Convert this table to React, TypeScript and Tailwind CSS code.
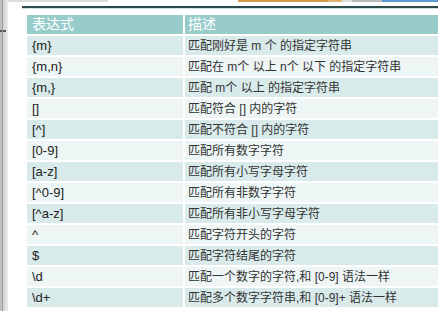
const rows: [string, string][] = [
  ["{m}", "匹配刚好是 m 个 的指定字符串"],
  ["{m,n}", "匹配在 m个 以上 n个 以下 的指定字符串"],
  ["{m,}", "匹配 m个 以上 的指定字符串"],
  ["[]", "匹配符合 [] 内的字符"],
  ["[^]", "匹配不符合 [] 内的字符"],
  ["[0-9]", "匹配所有数字字符"],
  ["[a-z]", "匹配所有小写字母字符"],
  ["[^0-9]", "匹配所有非数字字符"],
  ["[^a-z]", "匹配所有非小写字母字符"],
  ["^", "匹配字符开头的字符"],
  ["$", "匹配字符结尾的字符"],
  ["\\d", "匹配一个数字的字符,和 [0-9] 语法一样"],
  ["\\d+", "匹配多个数字字符串,和 [0-9]+ 语法一样"],
];

const font = "font-['Liberation_Sans','Noto_Sans_CJK_SC',sans-serif]";

export default function App() {
  return (
    <div className={`flex h-[311px] w-[438px] overflow-hidden bg-white ${font}`}>
      <div className="relative w-[8px] shrink-0 bg-gradient-to-r from-[#b9b9b9] via-[#d6d6d6] to-[#ececec]">
        <div className="absolute left-0 top-[30px] h-[2px] w-[6px] bg-[#555]" />
        <div className="absolute left-[2px] top-0 h-full w-px bg-[#9a9a9a]" />
      </div>
      <div className="flex flex-1 flex-col">
        <div className="flex h-[2px]">
          <div className="w-[100px] bg-[#dcdcdc]" />
          <div className="w-[130px] bg-white" />
          <div className="w-[90px] bg-[#d39a4c]" />
          <div className="w-[14px] bg-[#e0b070]" />
          <div className="w-[10px] bg-[#dddddd]" />
          <div className="w-[30px] bg-[#b9b9b9]" />
          <div className="flex-1 bg-[#5b9bd0]" />
        </div>
        <div className="ml-[14px] mt-[4px] h-[2px] bg-[#2c4a4a]" />
        <div className="ml-[14px] h-px bg-[#cfe3e3]" />
        <div className="ml-[19px] mt-[6px] grid grid-cols-[156px_1fr] gap-[2px]">
          <div className="flex h-[19px] items-center bg-[#97cccb] pl-[5px] text-[14px] text-white">表达式</div>
          <div className="flex h-[19px] items-center bg-[#97cccb] pl-[3px] text-[14px] text-white">描述</div>
          {rows.map(([a, b], i) => {
            const bg = i % 2 === 0 ? "bg-[#d8eaea]" : "bg-[#edf5f5]";
            return [
              <div key={`a${i}`} className={`flex h-[19px] items-center pl-[5px] text-[13px] text-[#222] ${bg}`}>
                {a}
              </div>,
              <div key={`b${i}`} className={`flex h-[19px] items-center whitespace-pre pl-[3px] text-[12px] text-[#333] ${bg}`}>
                {b}
              </div>,
            ];
          })}
        </div>
      </div>
    </div>
  );
}
